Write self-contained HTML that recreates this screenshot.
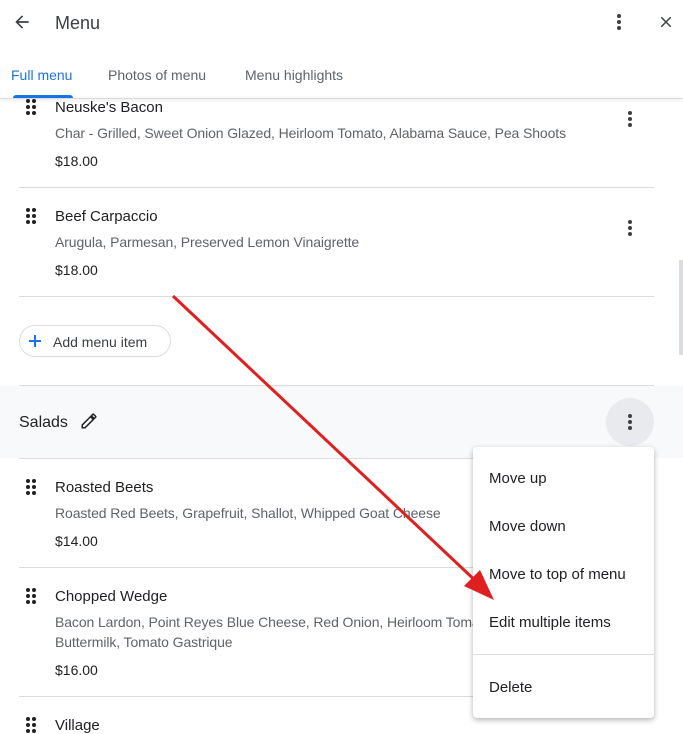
<!DOCTYPE html>
<html><head><style>
*{margin:0;padding:0;box-sizing:border-box}
body{width:683px;height:732px;overflow:hidden;background:#fff;font-family:"Liberation Sans",Arial,sans-serif;color:#202124;position:relative}
.abs{position:absolute}
.t{font-size:15px;color:#202124}
.d{font-size:14px;color:#5f6368;letter-spacing:-0.1px}
.p{font-size:14px;color:#202124}
.hr{position:absolute;left:19px;width:635px;height:1px;background:#dadce0}
.grip{position:absolute;width:10px;height:16px}
.grip i{position:absolute;width:4px;height:4px;border-radius:50%;background:#202124}
.kebab{position:absolute;width:4px;height:16px}
.kebab i{position:absolute;left:0;width:4px;height:4px;border-radius:50%;background:#3c4043}
.mi{position:absolute;left:489px;font-size:15px;color:#202124}
</style></head><body>
<svg class="abs" style="left:12px;top:12px" width="20" height="20" viewBox="0 0 24 24"><path d="M20 11H7.8l5.6-5.6L12 4l-8 8 8 8 1.4-1.4L7.8 13H20z" fill="#3c4043"/></svg>
<div class="abs" style="left:55px;top:13px;font-size:18px;color:#3c4043">Menu</div>
<div class="kebab" style="left:617px;top:14px"><i style="top:0"></i><i style="top:6px"></i><i style="top:12px"></i></div>
<svg class="abs" style="left:657px;top:13px" width="18" height="18" viewBox="0 0 24 24"><path d="M19 6.4 17.6 5 12 10.6 6.4 5 5 6.4 10.6 12 5 17.6 6.4 19 12 13.4 17.6 19 19 17.6 13.4 12z" fill="#3c4043"/></svg>
<div class="abs" style="left:11px;top:67px;font-size:14px;color:#1a73e8">Full menu</div>
<div class="abs" style="left:13px;top:95px;width:60px;height:3px;background:#1a73e8;border-radius:3px 3px 0 0"></div>
<div class="abs" style="left:108px;top:67px;font-size:14px;color:#5f6368">Photos of menu</div>
<div class="abs" style="left:245px;top:67px;font-size:14px;color:#5f6368">Menu highlights</div>

<div class="grip" style="left:26px;top:99px"><i style="left:0;top:0"></i><i style="left:6px;top:0"></i><i style="left:0;top:6px"></i><i style="left:6px;top:6px"></i><i style="left:0;top:12px"></i><i style="left:6px;top:12px"></i></div>
<div class="abs t" style="left:55px;top:99px">Neuske's Bacon</div>
<div class="abs d" style="left:55px;top:125px">Char - Grilled, Sweet Onion Glazed, Heirloom Tomato, Alabama Sauce, Pea Shoots</div>
<div class="abs p" style="left:55px;top:153px">$18.00</div>
<div class="kebab" style="left:628px;top:111px"><i style="top:0"></i><i style="top:6px"></i><i style="top:12px"></i></div>
<div class="abs" style="left:0;top:0;width:683px;height:98px;background:#fff"></div>
<div class="abs" style="left:12px;top:12px"><svg width="20" height="20" viewBox="0 0 24 24"><path d="M20 11H7.8l5.6-5.6L12 4l-8 8 8 8 1.4-1.4L7.8 13H20z" fill="#3c4043"/></svg></div>
<div class="abs" style="left:55px;top:13px;font-size:18px;color:#3c4043">Menu</div>
<div class="kebab" style="left:617px;top:14px"><i style="top:0"></i><i style="top:6px"></i><i style="top:12px"></i></div>
<svg class="abs" style="left:657px;top:13px" width="18" height="18" viewBox="0 0 24 24"><path d="M19 6.4 17.6 5 12 10.6 6.4 5 5 6.4 10.6 12 5 17.6 6.4 19 12 13.4 17.6 19 19 17.6 13.4 12z" fill="#3c4043"/></svg>
<div class="abs" style="left:11px;top:67px;font-size:14px;color:#1a73e8">Full menu</div>
<div class="abs" style="left:13px;top:95px;width:60px;height:3px;background:#1a73e8;border-radius:3px 3px 0 0"></div>
<div class="abs" style="left:108px;top:67px;font-size:14px;color:#5f6368">Photos of menu</div>
<div class="abs" style="left:245px;top:67px;font-size:14px;color:#5f6368">Menu highlights</div>
<div class="abs" style="left:0;top:98px;width:683px;height:1px;background:#dadce0;box-shadow:0 1px 3px rgba(0,0,0,.2)"></div>
<div class="abs" style="left:679px;top:260px;width:4px;height:95px;background:#dadce0"></div>
<div class="hr" style="top:187px"></div>

<div class="grip" style="left:26px;top:208px"><i style="left:0;top:0"></i><i style="left:6px;top:0"></i><i style="left:0;top:6px"></i><i style="left:6px;top:6px"></i><i style="left:0;top:12px"></i><i style="left:6px;top:12px"></i></div>
<div class="abs t" style="left:55px;top:208px">Beef Carpaccio</div>
<div class="abs d" style="left:55px;top:234px">Arugula, Parmesan, Preserved Lemon Vinaigrette</div>
<div class="abs p" style="left:55px;top:262px">$18.00</div>
<div class="kebab" style="left:628px;top:220px"><i style="top:0"></i><i style="top:6px"></i><i style="top:12px"></i></div>
<div class="hr" style="top:296px"></div>

<div class="abs" style="left:19px;top:325px;width:152px;height:32px;border:1px solid #dadce0;border-radius:16px"></div>
<svg class="abs" style="left:27px;top:333px" width="16" height="16" viewBox="0 0 16 16"><path d="M8 2v12M2 8h12" stroke="#1a73e8" stroke-width="2"/></svg>
<div class="abs" style="left:53px;top:334px;font-size:14px;color:#3c4043">Add menu item</div>

<div class="abs" style="left:0;top:386px;width:683px;height:72px;background:#f8f9fa"></div>
<div class="hr" style="top:385px"></div>
<div class="hr" style="top:458px"></div>
<div class="abs" style="left:19px;top:414px;font-size:16px">Salads</div>
<svg class="abs" style="left:80px;top:412px" width="18" height="18" viewBox="0 0 24 24"><path d="M3 17.25V21h3.75L17.8 9.94l-3.75-3.75zM20.7 7.04a1 1 0 0 0 0-1.41l-2.34-2.34a1 1 0 0 0-1.41 0l-1.83 1.83 3.75 3.75z" fill="none" stroke="#202124" stroke-width="2"/></svg>
<div class="abs" style="left:606px;top:398px;width:48px;height:48px;border-radius:50%;background:#e8eaed"></div>
<div class="kebab" style="left:628px;top:414px"><i style="top:0"></i><i style="top:6px"></i><i style="top:12px"></i></div>

<div class="grip" style="left:26px;top:479px"><i style="left:0;top:0"></i><i style="left:6px;top:0"></i><i style="left:0;top:6px"></i><i style="left:6px;top:6px"></i><i style="left:0;top:12px"></i><i style="left:6px;top:12px"></i></div>
<div class="abs t" style="left:55px;top:479px">Roasted Beets</div>
<div class="abs d" style="left:55px;top:505px">Roasted Red Beets, Grapefruit, Shallot, Whipped Goat Cheese</div>
<div class="abs p" style="left:55px;top:533px">$14.00</div>
<div class="hr" style="top:567px"></div>

<div class="grip" style="left:26px;top:588px"><i style="left:0;top:0"></i><i style="left:6px;top:0"></i><i style="left:0;top:6px"></i><i style="left:6px;top:6px"></i><i style="left:0;top:12px"></i><i style="left:6px;top:12px"></i></div>
<div class="abs t" style="left:55px;top:588px">Chopped Wedge</div>
<div class="abs d" style="left:55px;top:614px">Bacon Lardon, Point Reyes Blue Cheese, Red Onion, Heirloom Tomato</div>
<div class="abs d" style="left:55px;top:634px">Buttermilk, Tomato Gastrique</div>
<div class="abs p" style="left:55px;top:662px">$16.00</div>
<div class="hr" style="top:696px"></div>

<div class="grip" style="left:26px;top:717px"><i style="left:0;top:0"></i><i style="left:6px;top:0"></i><i style="left:0;top:6px"></i><i style="left:6px;top:6px"></i><i style="left:0;top:12px"></i><i style="left:6px;top:12px"></i></div>
<div class="abs t" style="left:55px;top:717px">Village</div>

<div class="abs" style="left:473px;top:447px;width:181px;height:271px;background:#fff;border-radius:4px;box-shadow:0 2px 6px rgba(0,0,0,.3)"></div>
<div class="mi" style="top:470px">Move up</div>
<div class="mi" style="top:518px">Move down</div>
<div class="mi" style="top:566px">Move to top of menu</div>
<div class="mi" style="top:614px">Edit multiple items</div>
<div class="abs" style="left:473px;top:654px;width:181px;height:1px;background:#dadce0"></div>
<div class="mi" style="top:679px">Delete</div>

<svg class="abs" style="left:0;top:0" width="683" height="732"><line x1="173" y1="296" x2="480" y2="585" stroke="#e02020" stroke-width="3"/><polygon points="494,600 464,586 480,570" fill="#e02020"/></svg>
</body></html>
